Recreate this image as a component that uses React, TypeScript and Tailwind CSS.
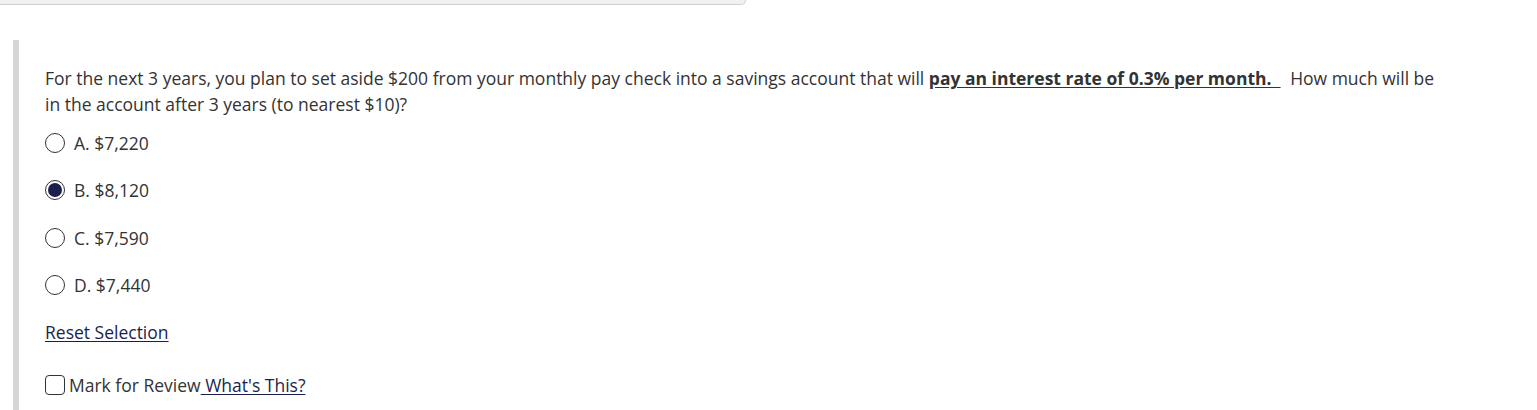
import React, { useState } from 'react';

const options = [
    { key: 'A', label: 'A. $7,220' },
    { key: 'B', label: 'B. $8,120' },
    { key: 'C', label: 'C. $7,590' },
    { key: 'D', label: 'D. $7,440' },
];

export default function App() {
    const [selected, setSelected] = useState<string | null>('B');
    const [marked, setMarked] = useState(false);

    return (
        <div className="w-[1537px] h-[410px] bg-white overflow-hidden text-[#333333]" style={{ fontFamily: '"Open Sans", sans-serif' }}>
            <div className="w-[746px] h-[5px] bg-[#f1f1f1] border-b border-r border-[#cfcfcf] rounded-br-[6px]"></div>
            <div className="flex mt-[35px] ml-[13px]">
                <div className="w-[6px] h-[400px] bg-[#d6d6d6] shrink-0"></div>
                <div className="pl-[26px] pt-[25px] w-[1426px]">
                    <p className="text-[17.5px] leading-[26px]">
                        For the next 3 years, you plan to set aside $200 from your monthly pay check into a savings account that will{' '}
                        <span className="font-bold underline underline-offset-2 whitespace-pre">pay an interest rate of 0.3% per month.  </span>
                        <span className="ml-[5px]">{'  '}How much will be in the account after 3 years (to nearest $10)?</span>
                    </p>
                    <div className="flex flex-col mt-[2px]">
                        {options.map((o) => (
                            <label key={o.key} className="flex items-center h-[47.5px] cursor-pointer" onClick={() => setSelected(o.key)}>
                                <span className="w-[20px] h-[20px] rounded-full border border-[#333] flex items-center justify-center shrink-0">
                                    {selected === o.key && <span className="w-[14px] h-[14px] rounded-full bg-[#1b1f4d]"></span>}
                                </span>
                                <span className="ml-[9px] text-[17.5px]">{o.label}</span>
                            </label>
                        ))}
                    </div>
                    <a href="#" className="block mt-[11px] text-[17.5px] leading-[24px] text-[#1b1f4d] underline underline-offset-2" onClick={(e) => { e.preventDefault(); setSelected(null); }}>
                        Reset Selection
                    </a>
                    <div className="flex items-center mt-[28px]">
                        <span
                            className="w-[20px] h-[20px] rounded-[4px] border border-[#333] shrink-0 cursor-pointer"
                            onClick={() => setMarked(!marked)}
                        ></span>
                        <span className="ml-[4px] text-[17.5px]">Mark for Review</span>
                        <a href="#" className="text-[17.5px] text-[#1b1f4d] underline underline-offset-2 whitespace-pre"> What's This?</a>
                    </div>
                </div>
            </div>
        </div>
    );
}
